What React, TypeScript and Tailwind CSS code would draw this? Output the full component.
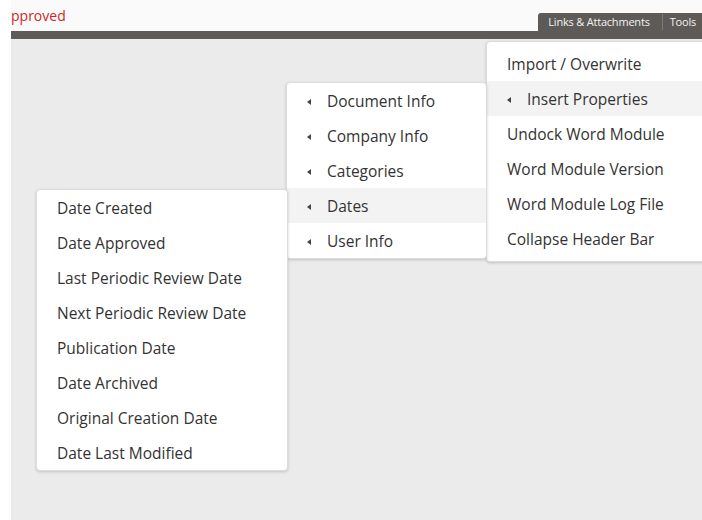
import React from 'react'

type MenuItem = {
    label: string
    sub?: boolean
    active?: boolean
}

const toolsMenu: MenuItem[] = [
    { label: 'Import / Overwrite' },
    { label: 'Insert Properties', sub: true, active: true },
    { label: 'Undock Word Module' },
    { label: 'Word Module Version' },
    { label: 'Word Module Log File' },
    { label: 'Collapse Header Bar' },
]

const propertiesMenu: MenuItem[] = [
    { label: 'Document Info', sub: true },
    { label: 'Company Info', sub: true },
    { label: 'Categories', sub: true },
    { label: 'Dates', sub: true, active: true },
    { label: 'User Info', sub: true },
]

const datesMenu: MenuItem[] = [
    { label: 'Date Created' },
    { label: 'Date Approved' },
    { label: 'Last Periodic Review Date' },
    { label: 'Next Periodic Review Date' },
    { label: 'Publication Date' },
    { label: 'Date Archived' },
    { label: 'Original Creation Date' },
    { label: 'Date Last Modified' },
]

const Arrow = () => (
    <span className="w-0 h-0 border-y-[3.5px] border-y-transparent border-r-[4px] border-r-[#444] mr-[16px]" />
)

const MenuRows = ({ items }: { items: MenuItem[] }) => (
    <>
        {items.map((item) => (
            <div
                key={item.label}
                className={`h-[35px] flex items-center pl-[20px] pt-[2px] ${item.active ? 'bg-[#f3f3f3]' : ''}`}
            >
                {item.sub && <Arrow />}
                <span className="text-[15.5px] text-[#333] whitespace-nowrap">{item.label}</span>
            </div>
        ))}
    </>
)

export default function App() {
    return (
        <div className="w-[702px] h-[520px] bg-white pl-[11px] flex flex-col overflow-hidden font-['Open_Sans',sans-serif]">
            {/* top header with document status and toolbar tabs */}
            <div className="h-[31px] bg-[#fafafa] flex items-end justify-between">
                <span className="self-center text-[14px] text-[#c92a26] leading-none mt-[1px]">pproved</span>
                <div className="h-[18px] bg-[#5e5a58] rounded-tl-[3px] flex items-center text-[11px] text-[#f2f2f2] tracking-[-0.2px] -mr-[4px]">
                    <span className="pl-[10px] pr-[12px] border-r border-[#7d7977]">Links &amp; Attachments</span>
                    <span className="pl-[7px] pr-[10px]">Tools</span>
                </div>
            </div>
            <div className="h-[8px] bg-[#5e5a58]" />

            <div className="flex-1 bg-[#ebebeb] relative">
                {/* Tools dropdown */}
                <div className="absolute top-[2px] left-[475px] w-[240px] pt-[4px] pb-[5px] bg-white border border-[#dcdcdc] rounded-[4px] shadow-[0_1px_3px_rgba(0,0,0,0.18)]">
                    <MenuRows items={toolsMenu} />
                </div>

                {/* Insert Properties submenu */}
                <div className="absolute top-[43px] left-[275px] w-[201px] bg-white border border-[#dcdcdc] rounded-[4px] shadow-[0_1px_3px_rgba(0,0,0,0.18)] overflow-hidden">
                    <MenuRows items={propertiesMenu} />
                </div>

                {/* Dates submenu */}
                <div className="absolute top-[150px] left-[25px] w-[252px] bg-white border border-[#dcdcdc] rounded-[4px] shadow-[0_1px_3px_rgba(0,0,0,0.18)]">
                    <MenuRows items={datesMenu} />
                </div>
            </div>
        </div>
    )
}
